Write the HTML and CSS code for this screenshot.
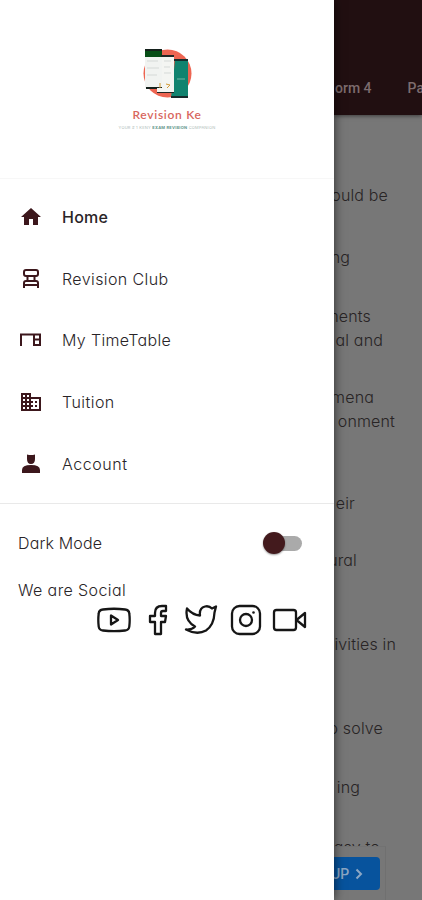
FILE: index.html
```html
<!DOCTYPE html>
<html lang="en">
<head>
<meta charset="utf-8">
<title>Revision Ke</title>
<link rel="stylesheet" href="styles.css">
</head>
<body>
<div class="app">
  <aside class="drawer">
    <header class="brand">
      <svg class="brand-mark" width="50" height="52" viewBox="0 0 50 52">
        <circle cx="25.500" cy="25.500" r="24" fill="#ed6552"/>
        <path d="M3 2h17v38H3z" fill="#f1f3f1"/><path d="M3 2h17v7H3z" fill="#064d16"/><path d="M3 1h17v2H3zM4 39h16v2H4z" fill="#14201b"/>
        <path d="M33 12h13v38H29z" fill="#11836f"/><path d="M32 11h14v2H32zM29 48h17v2H29z" fill="#172b2b"/>
        <path d="M20 8h12v36H15v-4h5z" fill="#f4f5f2"/><path d="M19 7h13v2H19zM15 44h17v1H15z" fill="#202725"/>
        <path d="M5 13h11M5 20h12M5 27h10M22 13h7M22 19h6M22 25h7" stroke="#d5d9d7"/><path d="M18 35v5M24 36l4 1-3 3" stroke="#d39b36" fill="none"/><path d="M35 31h8" stroke="#73b7a7"/>
      </svg>
      <div class="brand-name">Revision Ke</div>
      <div class="brand-tag">YOUR # 1 KENY <b>EXAM REVISION</b> COMPANION</div>
    </header>
    <nav class="menu">
      <a class="item active"><svg viewBox="0 0 24 24"><path fill="currentColor" d="M10 20v-6h4v6h5v-8h3L12 3 2 12h3v8z"/></svg><span class="t-home">Home</span></a>
      <a class="item"><svg viewBox="0 0 24 24"><path d="M7 3h10q2 0 2 2v2q0 2-2 2H7Q5 9 5 7V5q0-2 2-2zM8.500 9v4M15.500 9v4M5 21v-5q0-2 2-2h10q2 0 2 2v5M5 18h14" fill="none" stroke="currentColor" stroke-width="2"/></svg><span class="t-club">Revision Club</span></a>
      <a class="item"><svg viewBox="0 0 24 24"><path d="M2 18V6.500h20M15 6v11h6V6M15 11.500h6" fill="none" stroke="currentColor" stroke-width="2"/></svg><span class="t-time">My TimeTable</span></a>
      <a class="item"><svg viewBox="0 0 24 24"><path fill="currentColor" d="M12 7V3H2v18h20V7H12zM6 19H4v-2h2v2zm0-4H4v-2h2v2zm0-4H4V9h2v2zm0-4H4V5h2v2zm4 12H8v-2h2v2zm0-4H8v-2h2v2zm0-4H8V9h2v2zm0-4H8V5h2v2zm10 12h-8v-2h2v-2h-2v-2h2v-2h-2V9h8v10zm-2-8h-2v2h2v-2zm0 4h-2v2h2v-2z"/></svg><span class="t-tuition">Tuition</span></a>
      <a class="item"><svg viewBox="0 0 24 24"><path fill="currentColor" d="M8 2.500q4 1.200 8 0V7q0 5-4 5T8 7zM3 21v-3q0-5 9-5t9 5v3z"/></svg><span class="t-account">Account</span></a>
    </nav>
    <section class="settings">
      <div class="dark"><span class="t-dark">Dark Mode</span><span class="switch"><i class="thumb"></i></span></div>
      <div class="social-title"><span class="t-social">We are Social</span></div>
      <div class="social">
        <svg width="34" height="32" viewBox="0 0 34 32"><path d="M6 5.500Q17 4 28 5.500q4 .5 4.300 4 .8 6.500 0 13-.3 3.500-4.300 4-11 1.300-22 0-4-.5-4.300-4-.8-6.500 0-13Q2 6 6 5.500zM14 11.500v9l7-4.500z"/></svg>
        <svg width="20" height="32" viewBox="0 0 20 32"><path d="M18 2h-4Q7 2 7 9v3H2v6h5v12h6V18h4l1-6h-5V9q0-2 2-2h3z"/></svg>
        <svg width="34" height="32" viewBox="0 0 34 32"><path d="M3 4.500q5.500 6.500 13 7Q15 4 21 2.500q4-1 7 2l4-2-1.500 6Q30 21 22 26.500q-9 5-20-1 6 .5 9-3Q.500 17 3 4.500z"/></svg>
        <svg width="32" height="32" viewBox="0 0 32 32"><rect x="2" y="2" width="28" height="28" rx="7.500"/><circle cx="16" cy="16" r="6"/><circle cx="23.500" cy="8.500" r="1.300" class="dot"/></svg>
        <svg width="35" height="32" viewBox="0 0 35 32"><rect x="2" y="6" width="22" height="20" rx="2.500"/><path d="M33 9v14l-8.500-7z"/></svg>
      </div>
    </section>
  </aside>
  <main class="behind">
    <header class="tabs"><span>orm 4</span><span class="tab-next">Pa</span></header>
    <div class="lines">
      <p style="--gap:68px;--end:34px">ould be</p>
      <p style="--gap:38px;--end:72px">ng</p>
      <p style="--gap:35px;--end:51px">ments</p>
      <p style="--gap:0px;--end:39px">al and</p>
      <p style="--gap:33px;--end:48px">mena</p>
      <p style="--gap:0px;--end:27px">onment</p>
      <p style="--gap:58px;--end:67px">eir</p>
      <p style="--gap:33px;--end:65px">ural</p>
      <p style="--gap:60px;--end:26px">ivities in</p>
      <p style="--gap:60px;--end:39px">o solve</p>
      <p style="--gap:35px;--end:62px">ing</p>
      <p style="--gap:36px;--end:42px">easy to</p>
    </div>
    <footer class="cta"><div class="button"><span>UP</span><svg width="8" height="12" viewBox="0 0 8 12"><path d="M1.500 1.500L6 6l-4.500 4.500"/></svg></div></footer>
  </main>
</div>
</body>
</html>
```
FILE: styles.css
```css
* { box-sizing: border-box; }
body { margin: 0; width: 422px; height: 900px; overflow: hidden; font-family: Inter, sans-serif; font-feature-settings: "cv11"; }
.app { display: grid; grid-template-columns: 334px 88px; height: 900px; }
.drawer { background: #fff; color: #292427; box-shadow: 0 0 10px rgba(0,0,0,.65); z-index: 1; }
.brand { height: 179px; padding-top: 48px; display: flex; flex-direction: column; align-items: center; border-bottom: 1px solid #f7f7f7; }
.brand-mark { display: block; }
.brand-name { font: 600 12px/14px Lato, sans-serif; letter-spacing: .7px; color: #d8665d; margin-top: 8px; white-space: nowrap; }
.brand-tag { font-size: 4px; line-height: 8px; letter-spacing: .22px; color: #aebbb8; margin-top: 2px; white-space: nowrap; }
.brand-tag b { color: #62968a; }
.menu { height: 325px; padding-top: 7.5px; border-bottom: 1px solid #e9e9e9; }
.item { height: 61.6px; padding-left: 19px; display: flex; align-items: center; font-size: 16px; font-weight: 300; }
.item svg { width: 24px; height: 24px; margin-right: 19px; color: #3c171c; }
.item.active { font-weight: 450; }
.t-home { letter-spacing: .25px; }
.t-club { letter-spacing: .4px; }
.t-time { letter-spacing: .35px; }
.t-tuition { letter-spacing: .45px; }
.t-account { letter-spacing: .55px; }
.t-dark { letter-spacing: .15px; }
.t-social { letter-spacing: .4px; }
.settings { font-size: 16px; font-weight: 300; }
.dark { height: 78px; padding: 0 32px 0 18px; display: flex; align-items: center; justify-content: space-between; }
.switch { width: 36px; height: 15px; border-radius: 8px; background: #aaa; display: flex; align-items: center; }
.thumb { width: 22px; height: 22px; border-radius: 50%; background: #431a1d; margin-left: -3px; box-shadow: 0 1px 2px rgba(0,0,0,.4); }
.social-title { padding-left: 18px; height: 21.5px; line-height: 16px; }
.social { padding-left: 97px; display: flex; }
.social svg { flex: none; fill: none; stroke: #161616; stroke-width: 2.3; stroke-linejoin: round; }
.social svg:nth-child(2) { margin-left: 17px; }
.social svg:nth-child(3) { margin-left: 16px; }
.social svg:nth-child(4) { margin-left: 12px; }
.social svg:nth-child(5) { margin-left: 10px; }
.social .dot { fill: #161616; stroke: none; }
.behind { width: 88px; height: 900px; overflow: hidden; background: #777; color: #282425; display: flex; flex-direction: column; }
.tabs { height: 115px; flex: none; background: #210f11; color: #7d6c6e; font: 500 14px/16px Roboto, sans-serif; padding: 80px 0 0 1px; display: flex; white-space: nowrap; box-shadow: 0 1px 4px rgba(0,0,0,.5); }
.tab-next { margin-left: 36px; }
.lines { height: 731px; flex: none; overflow: hidden; font-size: 16px; letter-spacing: .15px; font-weight: 350; }
.lines p { margin: var(--gap) 0 0; padding-right: var(--end); height: 24px; line-height: 24px; display: flex; justify-content: flex-end; white-space: nowrap; }
.lines p:first-child { margin-top: 0; padding-top: 68px; height: 92px; }
.cta { width: 52px; height: 54px; padding-top: 10px; border-top: 1px solid #727272; border-right: 1px solid #707070; }
.button { width: 46px; height: 33px; border-radius: 0 4px 4px 0; background: #07539d; color: #8ca7c4; display: flex; align-items: center; font: 500 14px/16px Roboto, sans-serif; }
.button span { margin-left: -3px; }
.button svg { margin-left: 6px; fill: none; stroke: currentColor; stroke-width: 2; }
```
